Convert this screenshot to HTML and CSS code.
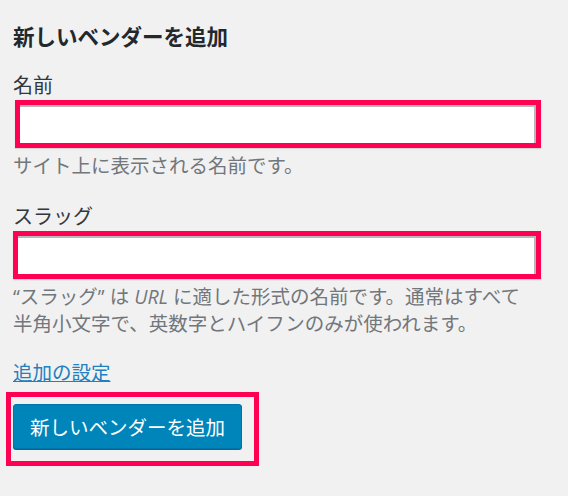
FILE: index.html
```html
<!DOCTYPE html>
<html lang="ja">
<head>
  <meta charset="UTF-8" />
  <title>新しいベンダーを追加</title>
  <link rel="stylesheet" href="styles.css">
</head>
<body>

<div class="form-wrap">
  <h2>新しいベンダーを追加</h2>

  <form class="add-vendor">
    <div class="form-field">
      <label for="tag-name">名前</label>
      <div class="mark mark-name">
        <input type="text" id="tag-name" />
      </div>
      <p class="description">サイト上に表示される名前です。</p>
    </div>

    <div class="form-field">
      <label for="tag-slug">スラッグ</label>
      <div class="mark mark-slug">
        <input type="text" id="tag-slug" />
      </div>
      <p class="description">“スラッグ” は <em>URL</em> に適した形式の名前です。通常はすべて<br>半角小文字で、英数字とハイフンのみが使われます。</p>
    </div>

    <a href="#" class="more-link">追加の設定</a>

    <div class="mark mark-submit">
      <button type="button" class="button-primary">新しいベンダーを追加</button>
    </div>
  </form>
</div>

</body>
</html>
```

FILE: styles.css
```css
body {
  margin: 0;
  background: #f1f1f1;
  font-family: "Open Sans", "Noto Sans CJK JP", sans-serif;
  color: #23282d;
}
.form-wrap {
  padding: 22px 0 0 13px;
}
h2 {
  margin: 0 0 21px;
  font-size: 21.5px;
  line-height: 29px;
  font-weight: bold;
  color: #23282d;
}
.form-field label {
  display: block;
  font-size: 20px;
  line-height: 28px;
  color: #32373c;
}
.form-field {
  margin-bottom: 24px;
}

/* red highlight boxes */
.mark {
  border: 5px solid #ff0052;
  box-shadow: 0 1px 1px rgba(0,0,0,0.12);
}
.mark-name {
  width: 516px;
  margin-left: 2px;
}
.mark-slug {
  width: 518px;
}
.mark input {
  display: block;
  box-sizing: border-box;
  width: 100%;
  height: 38px;
  margin: 0;
  border: none;
  border-top: 2px solid #b4b9be;
  border-right: 2px solid #b4b9be;
  background: #fff;
  outline: none;
}
.description {
  margin: 4px 0 0;
  font-size: 19.5px;
  line-height: 27px;
  color: #72777c;
}
.description em {
  font-style: italic;
}
.more-link {
  display: block;
  width: max-content;
  font-size: 19.5px;
  line-height: 26px;
  color: #2180c0;
  text-decoration: underline;
  margin-top: -1px;
}
.mark-submit {
  display: inline-block;
  margin: 6px 0 0 -7px;
  padding: 7px 12px 12px 2px;
  box-shadow: none;
}
.button-primary {
  display: block;
  height: 45px;
  padding: 0 16px;
  background: #0085ba;
  border: 1px solid #0073aa;
  border-radius: 3px;
  box-shadow: 0 1px 0 #006799;
  color: #fff;
  font-family: "Open Sans", "Noto Sans CJK JP", sans-serif;
  font-size: 19.5px;
  cursor: pointer;
}
```
